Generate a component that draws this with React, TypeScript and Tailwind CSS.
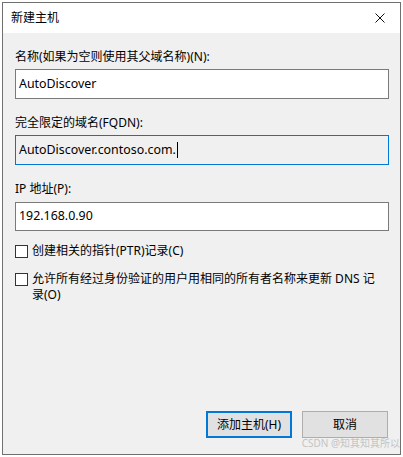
import React from "react";

const font = { fontFamily: '"Noto Sans", "Noto Sans CJK SC", sans-serif' };

function Field({ label, value, focused, gap = "mt-[4px]", h = "h-[30px]" }: { label: string; value: string; focused?: boolean; gap?: string; h?: string }) {
	return (
		<div className="flex flex-col">
			<label className="text-[12px] leading-[16px] text-black">{label}</label>
			<div
				className={`${gap} ${h} w-[374px] flex items-center px-[3px] text-[12.4px] text-black border ${
					focused ? "border-[#0078d7] bg-[#f0f0f0]" : "border-[#7a7a7a] bg-white"
				}`}
			>
				<span>{value}</span>
				{focused && <span className="ml-[1px] w-[1px] h-[16px] bg-black" />}
			</div>
		</div>
	);
}

function Check({ children }: { children: React.ReactNode }) {
	return (
		<div className="flex items-start gap-[4px] text-[12px] leading-[16px] text-black">
			<span className="mt-[2px] w-[13px] h-[13px] shrink-0 border border-[#333333] bg-white" />
			<span className="w-[352px]">{children}</span>
		</div>
	);
}

export default function App() {
	return (
		<div className="w-[403px] h-[457px] bg-white p-[2px]" style={font}>
			<div className="relative h-full flex flex-col border border-[#707070] bg-[#f0f0f0]">
				<div className="h-[30px] bg-white flex items-center justify-between pl-[8px] pr-[11px]">
					<span className="text-[12px] text-black">新建主机</span>
					<svg width="10" height="10" viewBox="0 0 10 10" className="mr-[4px]">
						<path d="M0.5 0.5 L9.5 9.5 M9.5 0.5 L0.5 9.5" stroke="#111" strokeWidth="1" />
					</svg>
				</div>

				<div className="flex-1 flex flex-col px-[12px] pt-[16px] pb-[16px]">
					<Field label="名称(如果为空则使用其父域名称)(N):" value="AutoDiscover" />
					<div className="mt-[16px]">
						<Field label="完全限定的域名(FQDN):" value="AutoDiscover.contoso.com." focused />
					</div>
					<div className="mt-[16px]">
						<Field label="IP 地址(P):" value="192.168.0.90" gap="mt-[5px]" h="h-[29px]" />
					</div>

					<div className="mt-[12px] flex flex-col gap-[12px]">
						<Check>创建相关的指针(PTR)记录(C)</Check>
						<Check>允许所有经过身份验证的用户用相同的所有者名称来更新 DNS 记录(O)</Check>
					</div>

					<div className="mt-auto flex justify-end gap-[10px]">
						<button className="w-[86px] h-[27px] border-2 border-[#0078d7] bg-[#e1e1e1] text-[12px] text-black">
							添加主机(H)
						</button>
						<button className="w-[86px] h-[27px] border border-[#adadad] bg-[#e1e1e1] text-[12px] text-black">
							取消
						</button>
					</div>
				</div>

				<span className="absolute right-[0px] bottom-[5px] text-[10px] leading-[12px] text-[#c4c4c4]">
					CSDN @知其知其所以
				</span>
			</div>
		</div>
	);
}
